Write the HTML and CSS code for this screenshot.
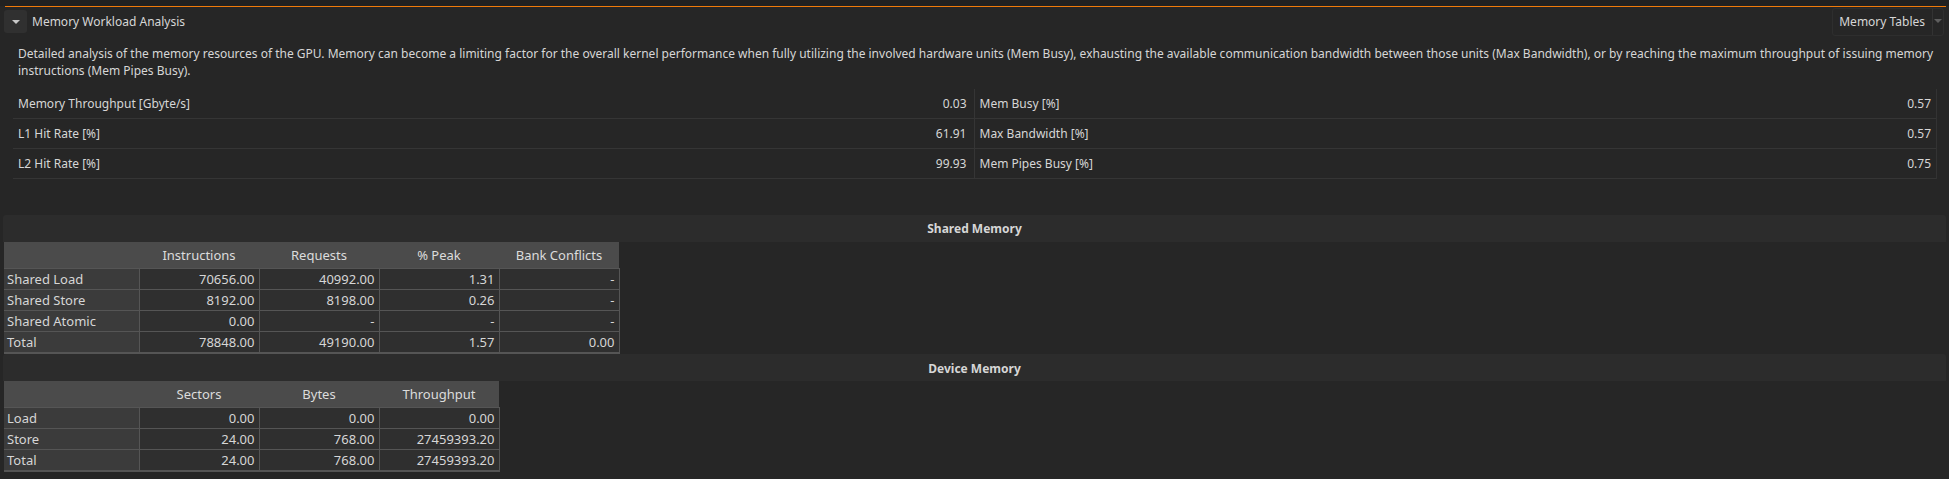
FILE: index.html
```html
<!DOCTYPE html>
<html lang="en">
<head>
    <meta charset="UTF-8">
    <title>Memory Workload Analysis</title>
    <link rel="stylesheet" href="styles.css">
</head>
<body>
    <div class="top-strip"></div>

    <div class="section">
        <!-- section header -->
        <div class="section-header">
            <div class="collapse-btn">
                <svg width="10" height="6" viewBox="0 0 10 6"><path d="M1 1 L9 1 L5 5 Z" fill="#c8c8c8"/></svg>
            </div>
            <div class="section-title">Memory Workload Analysis</div>
            <div class="combo">
                <span class="combo-text">Memory Tables</span>
                <span class="combo-arrow">
                    <svg width="8" height="5" viewBox="0 0 8 5"><path d="M0 0 L8 0 L4 4 Z" fill="#5e5e5e"/></svg>
                </span>
            </div>
        </div>

        <p class="desc">Detailed analysis of the memory resources of the GPU. Memory can become a limiting factor for the overall kernel performance when fully utilizing the involved hardware units (Mem Busy), exhausting the available communication bandwidth between those units (Max Bandwidth), or by reaching the maximum throughput of issuing memory instructions (Mem Pipes Busy).</p>

        <div class="metrics">
            <div class="metric"><span>Memory Throughput [Gbyte/s]</span><span>0.03</span></div>
            <div class="metric"><span>Mem Busy [%]</span><span>0.57</span></div>
            <div class="metric"><span>L1 Hit Rate [%]</span><span>61.91</span></div>
            <div class="metric"><span>Max Bandwidth [%]</span><span>0.57</span></div>
            <div class="metric"><span>L2 Hit Rate [%]</span><span>99.93</span></div>
            <div class="metric"><span>Mem Pipes Busy [%]</span><span>0.75</span></div>
        </div>

        <div class="tables">
            <div class="table-title">Shared Memory</div>
            <table class="data">
                <tr><th class="corner"></th><th>Instructions</th><th>Requests</th><th>% Peak</th><th>Bank Conflicts</th></tr>
                <tr><td class="rowhead">Shared Load</td><td>70656.00</td><td>40992.00</td><td>1.31</td><td>-</td></tr>
                <tr><td class="rowhead">Shared Store</td><td>8192.00</td><td>8198.00</td><td>0.26</td><td>-</td></tr>
                <tr><td class="rowhead">Shared Atomic</td><td>0.00</td><td>-</td><td>-</td><td>-</td></tr>
                <tr><td class="rowhead">Total</td><td>78848.00</td><td>49190.00</td><td>1.57</td><td>0.00</td></tr>
            </table>

            <div class="table-title second">Device Memory</div>
            <table class="data">
                <tr><th class="corner"></th><th>Sectors</th><th>Bytes</th><th>Throughput</th></tr>
                <tr><td class="rowhead">Load</td><td>0.00</td><td>0.00</td><td>0.00</td></tr>
                <tr><td class="rowhead">Store</td><td>24.00</td><td>768.00</td><td>27459393.20</td></tr>
                <tr><td class="rowhead">Total</td><td>24.00</td><td>768.00</td><td>27459393.20</td></tr>
            </table>
        </div>
    </div>
</body>
</html>
```

FILE: styles.css
```css
body {
    margin: 0;
    background-color: #262626;
    color: #d6d6d6;
    font-family: "Noto Sans", "Open Sans", sans-serif;
    font-size: 12px;
    height: 479px;
    overflow: hidden;
}

.top-strip {
    height: 6px;
    background-color: #212121;
}

.section {
    margin: 0 3px 0 5px;
    border-top: 1px solid #f07a0a;
}

/* header row */
.section-header {
    display: flex;
    align-items: center;
    height: 29px;
    margin-left: -1px;
}
.collapse-btn {
    width: 23px;
    height: 23px;
    background-color: #303030;
    border-radius: 3px;
    display: flex;
    align-items: center;
    justify-content: center;
}
.section-title {
    margin-left: 5px;
    flex: 1;
}
.combo {
    display: flex;
    align-items: center;
    height: 26px;
    border: 1px solid #2e2e2e;
    border-radius: 3px;
    margin-right: 2px;
}
.combo-text {
    padding: 0 7px 0 6px;
}
.combo-arrow {
    height: 100%;
    width: 10px;
    border-left: 1px solid #333;
    display: flex;
    align-items: center;
    justify-content: center;
}

.desc {
    margin: 9px 10px 0 13px;
    line-height: 17px;
}

/* metric grid */
.metrics {
    display: grid;
    grid-template-columns: 1fr 1fr;
    margin: 10px 9px 0 8px;
    border-right: 1px solid #333;
}
.metric {
    display: flex;
    justify-content: space-between;
    align-items: center;
    height: 29px;
    border-bottom: 1px solid #353535;
    padding: 0 7px 0 5px;
}
.metric:nth-child(odd) {
    border-right: 1px solid #353535;
}
.metric:nth-child(even) {
    padding: 0 5px 0 5px;
}

/* tables */
.tables {
    margin: 36px 0 0 -2px;
}
.table-title {
    background-color: #2c2c2c;
    text-align: center;
    font-weight: bold;
    height: 27px;
    line-height: 27px;
    border-radius: 3px 3px 0 0;
}
.table-title.second {
    line-height: 29px;
}
table.data {
    border-collapse: collapse;
    font-size: 13px;
    margin-left: 1px;
}
table.data th {
    background-color: #4b4b4b;
    font-weight: normal;
    height: 26px;
    width: 120px;
    padding: 0;
    text-align: center;
    color: #dcdcdc;
}
table.data th.corner {
    width: 135px;
}
table.data td {
    border: 1px solid #555;
    height: 20px;
    padding: 0 4px 0 3px;
    text-align: right;
    background-color: #2f2f2f;
    line-height: 18px;
}
table.data td.rowhead {
    text-align: left;
    background-color: #3b3b3b;
    border-left: none;
}
table.data tr:last-child td {
    border-bottom: 2px solid #555;
}
```
